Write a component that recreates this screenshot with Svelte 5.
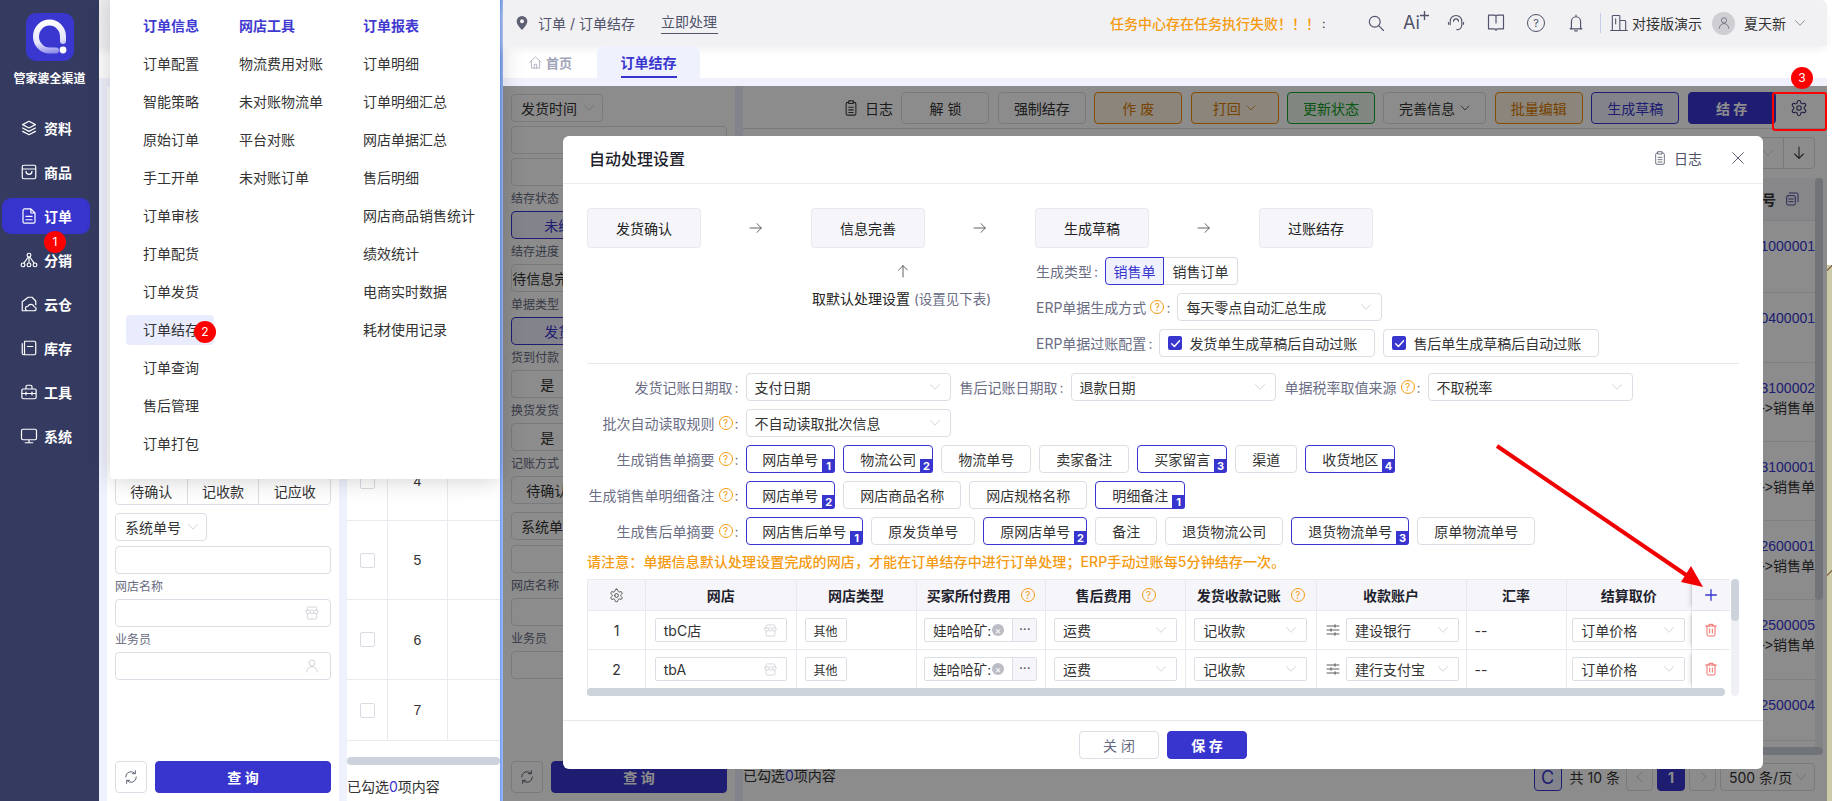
<script lang="ts">
	const icons: Record<string, string> = {
		layers: 'M12 3 3.5 7.5 12 12l8.5-4.5zM3.5 12l8.5 4.5 8.5-4.5M3.5 16.5 12 21l8.5-4.5',
		bag: 'M5 3h14a2 2 0 0 1 2 2v14a2 2 0 0 1-2 2H5a2 2 0 0 1-2-2V5a2 2 0 0 1 2-2zM3 8h18M8 11c0 5.5 8 5.5 8 0',
		doc: 'M6 2.5h8.5L20 8v11.5a2 2 0 0 1-2 2H6a2 2 0 0 1-2-2v-15a2 2 0 0 1 2-2zM14.5 2.5V8H20M8 12.5h8M8 17h8',
		nodes: 'M9.5 5.5a2.5 2.5 0 1 0 5 0a2.5 2.5 0 1 0-5 0M1.5 18.5a2.5 2.5 0 1 0 5 0a2.5 2.5 0 1 0-5 0M9.5 18.5a2.5 2.5 0 1 0 5 0a2.5 2.5 0 1 0-5 0M17.5 18.5a2.5 2.5 0 1 0 5 0a2.5 2.5 0 1 0-5 0M12 8v8M11 8l-6 8.5M13 8l6 8.5',
		cloud: 'M3 21V9l8-6h5l5 5v5M3 21h6M10 21a3 3 0 0 1 .5-6 4.5 4.5 0 0 1 8.5 1 2.5 2.5 0 0 1 0 5z',
		box: 'M6 3h13a2 2 0 0 1 2 2v14a2 2 0 0 1-2 2H6zM3 6v13a2 2 0 0 0 2 2M10 10h7',
		tool: 'M4 8h16a1.5 1.5 0 0 1 1.5 1.5V19a2 2 0 0 1-2 2h-15a2 2 0 0 1-2-2V9.5A1.5 1.5 0 0 1 4 8zM8 8V5a2 2 0 0 1 2-2h4a2 2 0 0 1 2 2v3M2.5 14h19M8 12v4M16 12v4',
		screen: 'M4 3h16a2 2 0 0 1 2 2v10a2 2 0 0 1-2 2H4a2 2 0 0 1-2-2V5a2 2 0 0 1 2-2zM12 17v4M7 21h10',
		search: 'M4 10.5a6.5 6.5 0 1 0 13 0a6.5 6.5 0 1 0-13 0M15.5 15.5 21 21',
		headset: 'M5 14v-4a7 7 0 0 1 14 0v4M3 11.5v2M21 11.5v2M19 14c0 3.5-2.5 6-6 6M9 10a3 3 0 0 1 6 0',
		book: 'M3 2.5h7a2 2 0 0 1 2 2 2 2 0 0 1 2-2h7V19h-7a2 2 0 0 0-2 2 2 2 0 0 0-2-2H3zM12 4.5V12',
		bell: 'M6.5 18v-8a5.5 5.5 0 0 1 11 0v8l1.5 1H5zM10.5 21.5h3M12 2.5v2',
		building: 'M4 21V4a1 1 0 0 1 1-1h7a1 1 0 0 1 1 1v17M13 9h6a1 1 0 0 1 1 1v11M2 21h20M8 7v6',
		user: 'M7.5 7.5a4.5 4.5 0 1 0 9 0a4.5 4.5 0 1 0-9 0M4 21c0-4.5 3.5-8 8-8s8 3.5 8 8',
		shop: 'M5 8V5a2 2 0 0 1 2-2h10a2 2 0 0 1 2 2v3M3 8h18v2a3 3 0 0 1-6 0 3 3 0 0 1-6 0 3 3 0 0 1-6 0zM5 13v6a2 2 0 0 0 2 2h10a2 2 0 0 0 2-2v-6',
		refresh: 'M4 12a8 8 0 0 1 14-5.3M20 12a8 8 0 0 1-14 5.3M18.5 2.5V7H14M5.5 21.5V17H10',
		chev: 'M4.5 8 12 16l7.5-8',
		gear: 'M12.22 2h-.44a2 2 0 0 0-2 2v.18a2 2 0 0 1-1 1.73l-.43.25a2 2 0 0 1-2 0l-.15-.08a2 2 0 0 0-2.73.73l-.22.38a2 2 0 0 0 .73 2.73l.15.1a2 2 0 0 1 1 1.72v.51a2 2 0 0 1-1 1.74l-.15.09a2 2 0 0 0-.73 2.73l.22.38a2 2 0 0 0 2.73.73l.15-.08a2 2 0 0 1 2 0l.43.25a2 2 0 0 1 1 1.73V20a2 2 0 0 0 2 2h.44a2 2 0 0 0 2-2v-.18a2 2 0 0 1 1-1.73l.43-.25a2 2 0 0 1 2 0l.15.08a2 2 0 0 0 2.73-.73l.22-.39a2 2 0 0 0-.73-2.73l-.15-.08a2 2 0 0 1-1-1.74v-.5a2 2 0 0 1 1-1.74l.15-.09a2 2 0 0 0 .73-2.73l-.22-.38a2 2 0 0 0-2.73-.73l-.15.08a2 2 0 0 1-2 0l-.43-.25a2 2 0 0 1-1-1.73V4a2 2 0 0 0-2-2zM9 12a3 3 0 1 0 6 0a3 3 0 1 0-6 0',
		clip: 'M9 2.5h6v3.5H9zM9 4.5H7.5a2 2 0 0 0-2 2V19.5a2 2 0 0 0 2 2h9a2 2 0 0 0 2-2V6.5a2 2 0 0 0-2-2H15M9 11h6M9 14.5h6M9 18h6',
		trash: 'M4 6h16M9 6V3.5h6V6M6 6v13a2 2 0 0 0 2 2h8a2 2 0 0 0 2-2V6M10 10.5v6M14 10.5v6',
		sliders: 'M3 6h18M15 4v4M3 12h18M9 10v4M3 18h18M15 16v4',
		home: 'M3 11.5 12 3l9 8.5M5.5 10v11h13V10M10 21v-6h4v6',
		right: 'M3 12h17M13.5 5.5 20 12l-6.5 6.5',
		up: 'M12 21V4M5.5 10.5 12 4l6.5 6.5',
		down: 'M12 3v17M5.5 13.5 12 20l6.5-6.5',
		copy: 'M8 3h11a2 2 0 0 1 2 2v11M6 7h9a2 2 0 0 1 2 2v10a2 2 0 0 1-2 2H6a2 2 0 0 1-2-2V9a2 2 0 0 1 2-2zM7 12h7M7 16h7',
		close: 'M4 4l16 16M20 4 4 20',
		plus: 'M12 4v16M4 12h16',
		left: 'M15 4 7 12l8 8',
		next: 'M9 4l8 8-8 8',
		check: 'M5 12.5l5 5L19.5 7'
	};

	const nav = [
		{ name: '资料', icon: 'layers' },
		{ name: '商品', icon: 'bag' },
		{ name: '订单', icon: 'doc', active: true },
		{ name: '分销', icon: 'nodes' },
		{ name: '云仓', icon: 'cloud' },
		{ name: '库存', icon: 'box' },
		{ name: '工具', icon: 'tool' },
		{ name: '系统', icon: 'screen' }
	];

	const menus = [
		{ title: '订单信息', items: ['订单配置', '智能策略', '原始订单', '手工开单', '订单审核', '打单配货', '订单发货', '订单结存', '订单查询', '售后管理', '订单打包'] },
		{ title: '网店工具', items: ['物流费用对账', '未对账物流单', '平台对账', '未对账订单'] },
		{ title: '订单报表', items: ['订单明细', '订单明细汇总', '网店单据汇总', '售后明细', '网店商品销售统计', '绩效统计', '电商实时数据', '耗材使用记录'] }
	];

	const toolbar = [
		{ text: '解 锁' },
		{ text: '强制结存' },
		{ text: '作 废', kind: 'warn' },
		{ text: '打回', kind: 'warn', chev: true },
		{ text: '更新状态', kind: 'ok' },
		{ text: '完善信息', chev: true, wide: true },
		{ text: '批量编辑', kind: 'warn' },
		{ text: '生成草稿', kind: 'line' },
		{ text: '结 存', kind: 'solid' }
	];

	const rows = [
		{ h: 72, no: '1', code: '1000001' },
		{ h: 70, no: '2', code: '0400001' },
		{ h: 79, no: '3', code: '3100002', sale: true },
		{ h: 79, no: '4', code: '3100001', sale: true },
		{ h: 79, no: '5', code: '2600001', sale: true },
		{ h: 80, no: '6', code: '2500005', sale: true },
		{ h: 61, no: '7', code: '2500004' }
	];

	const tagRows = [
		{ label: '生成销售单摘要', tags: [['网店单号', 1], ['物流公司', 2], ['物流单号'], ['卖家备注'], ['买家留言', 3], ['渠道'], ['收货地区', 4]] },
		{ label: '生成销售单明细备注', tags: [['网店单号', 2], ['网店商品名称'], ['网店规格名称'], ['明细备注', 1]] },
		{ label: '生成售后单摘要', tags: [['网店售后单号', 1], ['原发货单号'], ['原网店单号', 2], ['备注'], ['退货物流公司'], ['退货物流单号', 3], ['原单物流单号']] }
	];

	const shops = [
		{ no: 1, shop: 'tbC店', account: '建设银行' },
		{ no: 2, shop: 'tbA', account: '建行支付宝' }
	];
</script>

{#snippet icon(name, size = 16, color = 'currentColor', width = 1.6)}
	<svg class="icon" viewBox="0 0 24 24" width={size} height={size} fill="none" stroke={color} stroke-width={width} stroke-linecap="round" stroke-linejoin="round"><path d={icons[name]} /></svg>
{/snippet}

{#snippet help()}
	<span class="help">?</span>
{/snippet}

{#snippet select(text, cls = '')}
	<span class="field select {cls}"><span>{text}</span>{@render icon('chev', 14, '#c4c7d0', 1.3)}</span>
{/snippet}

{#snippet filterPanel()}
	<div class="filter">
		<span class="field pick"><span>发货时间</span>{@render icon('chev', 14, '#c4c7d0', 1.3)}</span>
		<span class="field input date"></span>
		<span class="field input date"></span>
		<span class="cap">结存状态</span>
		<div class="seg"><span class="on">未结存</span><span>已结存</span></div>
		<span class="cap">结存进度</span>
		<div class="seg"><span>待信息完善</span><span>待生成</span><span>待过账</span></div>
		<span class="cap">单据类型</span>
		<div class="seg"><span class="on">发货单</span><span>售后单</span></div>
		<span class="cap">货到付款</span>
		<div class="seg"><span>是</span><span>否</span><span>全部</span></div>
		<span class="cap">换货发货</span>
		<div class="seg"><span>是</span><span>否</span><span>全部</span></div>
		<span class="cap">记账方式</span>
		<div class="seg"><span>待确认</span><span>记收款</span><span>记应收</span></div>
		<span class="field pick mt8"><span>系统单号</span>{@render icon('chev', 14, '#c4c7d0', 1.3)}</span>
		<span class="field input mt5"></span>
		<span class="cap">网店名称</span>
		<span class="field input end">{@render icon('shop', 16, '#c9cbd3', 1.2)}</span>
		<span class="cap">业务员</span>
		<span class="field input end">{@render icon('user', 16, '#c9cbd3', 1.2)}</span>
		<div class="query">
			<button class="btn square">{@render icon('refresh', 16, '#555a6e', 1.4)}</button>
			<button class="btn solid grow">查 询</button>
		</div>
	</div>
{/snippet}

<div class="app">
	<aside class="sidebar">
		<div class="logo">
			<svg viewBox="0 0 48 48" width="48" height="48">
				<defs>
					<linearGradient id="ring" gradientUnits="userSpaceOnUse" x1="22" y1="6" x2="28" y2="42">
						<stop offset="0" stop-color="#ffffff" />
						<stop offset="0.6" stop-color="#e6e5fb" />
						<stop offset="1" stop-color="#7f7ce6" />
					</linearGradient>
				</defs>
				<path d="M37 28V23.5a13.5 14 0 1 0-13.5 14H30" fill="none" stroke="url(#ring)" stroke-width="6" stroke-linecap="round" />
				<circle cx="37" cy="37" r="3.4" fill="#fff" />
			</svg>
		</div>
		<div class="brand">管家婆全渠道</div>
		<nav class="nav">
			{#each nav as item}
				<div class="nav-item" class:active={item.active}>
					{@render icon(item.icon, 18, '#fff', 1.6)}
					<span>{item.name}</span>
				</div>
			{/each}
		</nav>
	</aside>

	<section class="back">
		<div class="back-top"></div>
		<div class="back-body">
			{@render filterPanel()}
			<div class="back-main">
				<div class="back-table">
					<div class="back-head"></div>
					{#each rows as row}
						<div class="back-row" style="height:{row.h}px">
							<span class="cell-check"><i class="checkbox"></i></span>
							<span class="cell-no">{row.no}</span>
						</div>
					{/each}
				</div>
				<div class="hbar"></div>
				<div class="picked">已勾选<b>0</b>项内容</div>
			</div>
		</div>
	</section>

	<div class="edge"></div>

	<section class="main">
		<header class="topbar">
			<div class="crumb">
				<svg viewBox="0 0 24 24" width="16" height="16"><path d="M12 1.5a8 8 0 0 0-8 8c0 5.8 8 13 8 13s8-7.2 8-13a8 8 0 0 0-8-8z" fill="#5d5f72" /><circle cx="12" cy="9.5" r="3" fill="#f1f1f4" /></svg>
				<span>订单 / 订单结存</span>
			</div>
			<span class="now">立即处理</span>
			<span class="alert">任务中心存在任务执行失败！！！</span>
			<span class="blink">:</span>
			<div class="tools">
				{@render icon('search', 20, '#50536a', 1.4)}
				<span class="ai">Ai<svg viewBox="0 0 10 10" width="9" height="9"><path d="M5 0v10M0 5h10" stroke="#50536a" stroke-width="1.5" /></svg></span>
				{@render icon('headset', 20, '#50536a', 1.4)}
				{@render icon('book', 20, '#50536a', 1.4)}
				<span class="round-help">?</span>
				{@render icon('bell', 20, '#50536a', 1.4)}
			</div>
			<i class="rule"></i>
			{@render icon('building', 20, '#50536a', 1.3)}
			<span class="company">对接版演示</span>
			<span class="avatar">{@render icon('user', 14, '#6a6c7c', 1.5)}</span>
			<span class="who">夏天新</span>
			{@render icon('chev', 14, '#6a6c7c', 1.3)}
		</header>

		<div class="tabs">
			<span class="tab home">{@render icon('home', 15, '#a9adbd', 1.4)}<span>首页</span></span>
			<span class="tab current"><span>订单结存</span></span>
		</div>
		<div class="tab-gap"></div>

		<div class="work">
			{@render filterPanel()}
			<div class="split"></div>
			<div class="panel">
				<div class="actions">
					<span class="log">{@render icon('clip', 18, '#3a3a3a', 1.4)}日志</span>
					{#each toolbar as b}
						<button class="btn act {b.kind ?? ''}" class:wide={b.wide}>{b.text}{#if b.chev}{@render icon('chev', 12, 'currentColor', 1.5)}{/if}</button>
					{/each}
					<span class="gear-slot">{@render icon('gear', 18, '#3a3a7a', 1.5)}</span>
				</div>
				<div class="sortbar">
					<span class="sort">
						<span class="sort-drop">{@render icon('chev', 14, '#c4c7d0', 1.3)}</span>
						<span class="sort-dir">{@render icon('down', 16, '#3a3a3a', 1.6)}</span>
					</span>
				</div>
				<div class="grid-wrap">
					<div class="grid">
						<div class="grid-head"><b>系统单号</b>{@render icon('copy', 16, '#3a3a9a', 1.4)}</div>
						{#each rows as row}
							<div class="grid-row" style="height:{row.h}px">
								<span class="code">2024{row.code}</span>
								{#if row.sale}<span class="sale">发货单-&gt;销售单</span>{/if}
							</div>
						{/each}
					</div>
					<div class="vbar"><i></i></div>
				</div>
				<div class="hbar dark"></div>
				<div class="panel-foot">
					<div class="picked">已勾选<b>0</b>项内容</div>
					<div class="pager">
						<span class="pg-c">C</span>
						<span class="total">共 10 条</span>
						<span class="pg">{@render icon('left', 14, '#c4c7d0', 1.4)}</span>
						<span class="pg on">1</span>
						<span class="pg">{@render icon('next', 14, '#c4c7d0', 1.4)}</span>
						<span class="size"><span>500 条/页</span>{@render icon('chev', 14, '#c4c7d0', 1.3)}</span>
					</div>
				</div>
			</div>
			<div class="mask"></div>
		</div>
	</section>

	<div class="strip"></div>

	<!-- fly-out menu opened from the sidebar -->
	<div class="flyout">
		{#each menus as col}
			<div class="fly-col">
				<h4>{col.title}</h4>
				{#each col.items as item}
					<span class="fly-item" class:hot={item === '订单结存'}>{item}</span>
				{/each}
			</div>
		{/each}
	</div>

	<!-- settings dialog -->
	<div class="modal">
		<div class="modal-head">
			<h3>自动处理设置</h3>
			<span class="head-log">{@render icon('clip', 16, '#5d5f72', 1.3)}日志</span>
			{@render icon('close', 16, '#50536a', 1.4)}
		</div>
		<div class="modal-body">
			<div class="flow">
				<span class="step">发货确认</span>
				<span class="flow-arrow">{@render icon('right', 16, '#555', 1.4)}</span>
				<span class="step">信息完善</span>
				<span class="flow-arrow">{@render icon('right', 16, '#555', 1.4)}</span>
				<span class="step">生成草稿</span>
				<span class="flow-arrow">{@render icon('right', 16, '#555', 1.4)}</span>
				<span class="step">过账结存</span>
			</div>
			<div class="flow-under">
				<div class="caption">
					{@render icon('up', 16, '#555', 1.4)}
					<p>取默认处理设置 <em>(设置见下表)</em></p>
				</div>
				<div class="erp">
					<div class="erp-row">
						<span class="lab">生成类型<i class="colon">:</i></span>
						<span class="radio on">销售单</span><span class="radio">销售订单</span>
					</div>
					<div class="erp-row">
						<span class="lab">ERP单据生成方式{@render help()}<i class="colon">:</i></span>
						{@render select('每天零点自动汇总生成', 'w205')}
					</div>
					<div class="erp-row">
						<span class="lab">ERP单据过账配置<i class="colon">:</i></span>
						<span class="field tick"><i class="checked">{@render icon('check', 13, '#fff', 2.6)}</i>发货单生成草稿后自动过账</span>
						<span class="field tick"><i class="checked">{@render icon('check', 13, '#fff', 2.6)}</i>售后单生成草稿后自动过账</span>
					</div>
				</div>
			</div>

			<div class="form">
				<div class="form-row">
					<span class="lab side">发货记账日期取<i class="colon">:</i></span>
					{@render select('支付日期', 'w205')}
					<span class="lab pad">售后记账日期取<i class="colon">:</i></span>
					{@render select('退款日期', 'w205')}
					<span class="lab pad">单据税率取值来源{@render help()}<i class="colon">:</i></span>
					{@render select('不取税率', 'w205')}
				</div>
				<div class="form-row">
					<span class="lab side">批次自动读取规则{@render help()}<i class="colon">:</i></span>
					{@render select('不自动读取批次信息', 'w205')}
				</div>
				{#each tagRows as row}
					<div class="form-row">
						<span class="lab side">{row.label}{@render help()}<i class="colon">:</i></span>
						<div class="tags">
							{#each row.tags as tag}
								<span class="tag" class:picked-tag={tag[1]}>{tag[0]}{#if tag[1]}<sup>{tag[1]}</sup>{/if}</span>
							{/each}
						</div>
					</div>
				{/each}
			</div>

			<p class="note">请注意：单据信息默认处理设置完成的网店，才能在订单结存中进行订单处理；ERP手动过账每5分钟结存一次。</p>

			<div class="sheet">
				<div class="sheet-left">
					<div class="sheet-clip">
						<div class="sheet-row head">
							<span class="c">{@render icon('gear', 15, '#444', 1.5)}</span>
							<span class="c">网店</span>
							<span class="c">网店类型</span>
							<span class="c">买家所付费用{@render help()}</span>
							<span class="c">售后费用{@render help()}</span>
							<span class="c">发货收款记账{@render help()}</span>
							<span class="c">收款账户</span>
							<span class="c">汇率</span>
							<span class="c">结算取价</span>
							<span class="c fixed">{@render icon('plus', 16, '#3835cf', 2)}</span>
						</div>
						{#each shops as s}
							<div class="sheet-row">
								<span class="c">{s.no}</span>
								<span class="c"><span class="field sm shop"><span>{s.shop}</span>{@render icon('shop', 15, '#c9cbd3', 1.2)}</span></span>
								<span class="c left"><span class="field sm kind">其他</span></span>
								<span class="c"><span class="field sm buyer"><span>娃哈哈矿:</span><i class="x">×</i><i class="dots">···</i></span></span>
								<span class="c">{@render select('运费', 'sm w123')}</span>
								<span class="c">{@render select('记收款', 'sm w113')}</span>
								<span class="c acc">{@render icon('sliders', 16, '#444', 1.3)}{@render select(s.account, 'sm w113')}</span>
								<span class="c rate">--</span>
								<span class="c">{@render select('订单价格', 'sm w113')}</span>
								<span class="c fixed">{@render icon('trash', 16, '#f0574f', 1.3)}</span>
							</div>
						{/each}
					</div>
					<div class="sheet-hbar"></div>
				</div>
				<div class="sheet-vbar"><i></i></div>
			</div>
		</div>
		<div class="modal-foot">
			<button class="btn foot">关 闭</button>
			<button class="btn solid foot">保 存</button>
		</div>
	</div>

	<!-- tutorial annotations drawn on top of the screenshot -->
	<i class="mark" style="left:44px;top:231px">1</i>
	<i class="mark" style="left:194px;top:321px">2</i>
	<i class="mark" style="left:1791px;top:67px">3</i>
	<i class="red-box"></i>
	<svg class="pointer" viewBox="0 0 1832 801" width="1832" height="801">
		<path d="M1497 446 1692 579" stroke="#f00000" stroke-width="4" fill="none" />
		<path d="M1703 587 1681 582 1691 566z" fill="#f00000" />
	</svg>
</div>

<style>
	:global(body) {
		margin: 0;
		background: #fff;
	}

	.app {
		position: relative;
		display: flex;
		width: 1832px;
		height: 801px;
		overflow: hidden;
		font-family: Inter, 'Noto Sans CJK SC', sans-serif;
		font-size: 14px;
		color: #333;
	}

	.icon {
		flex: none;
		display: block;
	}

	/* sidebar */
	.sidebar {
		flex: none;
		width: 99px;
		background: #353b60;
		color: #fff;
		display: flex;
		flex-direction: column;
		align-items: center;
		padding-top: 13px;
		box-sizing: border-box;
	}

	.logo {
		width: 48px;
		height: 48px;
		border-radius: 10px;
		background: #3a37d0;
	}

	.brand {
		margin-top: 9px;
		font-size: 12px;
		font-weight: 700;
		line-height: 17px;
		white-space: nowrap;
	}

	.nav {
		margin-top: 23px;
		width: 88px;
		display: flex;
		flex-direction: column;
		gap: 8px;
		margin-left: -7px;
	}

	.nav-item {
		height: 36px;
		border-radius: 9px;
		display: flex;
		align-items: center;
		gap: 6px;
		padding-left: 18px;
		font-weight: 700;
	}

	.nav-item.active {
		background: #3835cf;
	}

	/* window behind the flyout */
	.back {
		flex: none;
		width: 401px;
		display: flex;
		flex-direction: column;
		background: #eff1fd;
	}

	.back-top {
		height: 86px;
		flex: none;
		background: linear-gradient(#f1f1f4 0 46px, #fff 56px 78px, #eff1fd 78px);
	}

	.back-body {
		flex: 1;
		display: flex;
		padding-left: 8px;
		gap: 8px;
		min-height: 0;
		padding-top: 1px;
	}

	.back-main {
		flex: 1;
		background: #fff;
		min-width: 0;
		display: flex;
		flex-direction: column;
		overflow: hidden;
	}

	.back-head {
		height: 134px;
	}

	.back-row {
		display: flex;
		box-sizing: border-box;
		border-bottom: 1px solid #e8eaf0;
	}

	.cell-check {
		width: 40px;
		display: flex;
		align-items: center;
		justify-content: center;
		border-right: 1px solid #e8eaf0;
	}

	.checkbox {
		width: 13px;
		height: 13px;
		border: 1px solid #d9dbe3;
		border-radius: 2px;
	}

	.cell-no {
		width: 59px;
		display: flex;
		align-items: center;
		justify-content: center;
		border-right: 1px solid #e8eaf0;
		font-family: 'Liberation Sans', sans-serif;
	}

	.back-table {
		height: 662px;
		flex: none;
		overflow: hidden;
	}

	.hbar {
		height: 8px;
		margin-top: 8px;
		background: #cdd3db;
		border-radius: 4px;
		flex: none;
	}

	.picked {
		margin-top: 12px;
		line-height: 20px;
	}

	.picked b {
		font-weight: 400;
		color: #3835cf;
	}

	/* shared filter column */
	.filter {
		flex: none;
		width: 232px;
		box-sizing: border-box;
		padding: 8px 8px 0;
		background: #fff;
		display: flex;
		flex-direction: column;
		height: 100%;
	}

	.field {
		display: flex;
		align-items: center;
		box-sizing: border-box;
		border: 1px solid #dcdee6;
		border-radius: 4px;
		background: #fff;
		height: 28px;
		white-space: nowrap;
	}

	.pick {
		width: 92px;
		justify-content: space-between;
		padding: 0 6px 0 9px;
		font-size: 14px;
		flex: none;
	}

	.input {
		width: 216px;
		flex: none;
		justify-content: flex-end;
		padding-right: 10px;
	}

	.input.date {
		margin-top: 4px;
	}

	.mt8 {
		margin-top: 8px;
	}

	.mt5 {
		margin-top: 5px;
	}

	.cap {
		margin: 4px 0 3px;
		height: 18px;
		line-height: 18px;
		font-size: 12px;
		color: #666a80;
	}

	.seg {
		display: flex;
		height: 28px;
		flex: none;
		border: 1px solid #dcdee6;
		border-radius: 4px;
		box-sizing: border-box;
	}

	.seg span {
		flex: 1;
		display: flex;
		align-items: center;
		justify-content: center;
		border-right: 1px solid #dcdee6;
		white-space: nowrap;
		overflow: hidden;
	}

	.seg span:last-child {
		border-right: 0;
	}

	.seg .on {
		color: #3835cf;
		background: #eff1fd;
		box-shadow: 0 0 0 1px #3835cf;
		border-radius: 4px;
	}

	.query {
		margin-top: auto;
		margin-bottom: 8px;
		display: flex;
		gap: 8px;
	}

	.btn {
		font: inherit;
		border: 1px solid #dcdee6;
		border-radius: 4px;
		background: #fff;
		color: #333;
		padding: 0;
		display: inline-flex;
		align-items: center;
		justify-content: center;
		gap: 4px;
		box-sizing: border-box;
	}

	.btn.square {
		width: 32px;
		height: 32px;
		flex: none;
	}

	.btn.grow {
		flex: 1;
		height: 32px;
	}

	.btn.solid {
		background: #3835cf;
		border-color: #3835cf;
		color: #fff;
		font-weight: 700;
	}

	.edge {
		flex: none;
		width: 3px;
		background: linear-gradient(90deg, #6d9cf2, #9fbcf7);
	}

	/* main window */
	.main {
		flex: none;
		width: 1324px;
		display: flex;
		flex-direction: column;
		background: #fff;
	}

	.topbar {
		flex: none;
		height: 46px;
		box-sizing: border-box;
		background: #f1f1f4;
		display: flex;
		align-items: center;
		padding-left: 11px;
		color: #50536a;
		border-top-right-radius: 6px;
		box-shadow: 0 6px 8px -2px #f1f1f4;
		position: relative;
		z-index: 1;
	}

	.crumb {
		display: flex;
		align-items: center;
		gap: 8px;
		width: 147px;
	}

	.now {
		align-self: flex-start;
		height: 34px;
		line-height: 43px;
		box-sizing: border-box;
		border-bottom: 1px solid #50536a;
		padding-right: 1px;
	}

	.alert {
		margin-left: 392px;
		color: #f59a0f;
		font-weight: 500;
		white-space: nowrap;
		width: 212px;
	}

	.blink {
		color: #333;
		width: 34px;
		font-size: 12px;
	}

	.tools {
		display: grid;
		grid-template-columns: repeat(6, 40px);
		justify-items: center;
		align-items: center;
	}

	.ai {
		font-size: 18px;
		display: flex;
		align-items: flex-start;
		color: #50536a;
		line-height: 20px;
	}

	.ai svg {
		margin-top: -2px;
	}

	.round-help {
		width: 16px;
		height: 16px;
		border: 1.4px solid #50536a;
		border-radius: 50%;
		font-size: 11px;
		line-height: 16px;
		text-align: center;
	}

	.rule {
		width: 1px;
		height: 20px;
		background: #c7cde6;
		margin: 0 8px 0 4px;
	}

	.company {
		margin-left: 3px;
		color: #333;
		white-space: nowrap;
	}

	.avatar {
		width: 23px;
		height: 23px;
		border-radius: 50%;
		background: #cfcfd3;
		display: flex;
		align-items: center;
		justify-content: center;
		margin-left: 10px;
	}

	.who {
		margin: 0 7px 0 9px;
		color: #333;
	}

	.tabs {
		flex: none;
		height: 32px;
		display: flex;
		align-items: flex-end;
		background: #fff;
		padding-left: 25px;
	}

	.tab {
		display: inline-flex;
		align-items: center;
		justify-content: center;
		font-weight: 700;
		height: 32px;
	}

	.tab.home {
		width: 69px;
		gap: 3px;
		color: #a0a4b8;
		justify-content: flex-start;
		font-size: 13px;
	}

	.tab.current {
		width: 103px;
		background: #eff1fd;
		border-radius: 8px 8px 0 0;
		color: #3835cf;
		position: relative;
		z-index: 2;
	}

	.tab.current span {
		height: 32px;
		box-sizing: border-box;
		border-bottom: 2px solid #3835cf;
		line-height: 33px;
	}

	.tab-gap {
		flex: none;
		height: 8px;
		background: #eff1fd;
	}

	.work {
		flex: 1;
		display: flex;
		position: relative;
		min-height: 0;
		background: #fff;
	}

	.mask {
		position: absolute;
		inset: 0;
		background: rgba(0, 0, 0, 0.45);
	}

	.split {
		flex: none;
		width: 8px;
		background: #eff1fd;
	}

	.panel {
		flex: 1;
		min-width: 0;
		display: flex;
		flex-direction: column;
	}

	.actions {
		flex: none;
		height: 43px;
		box-sizing: border-box;
		padding-top: 6px;
		display: flex;
		justify-content: flex-end;
		align-items: flex-start;
		gap: 8.4px;
		border-bottom: 1px solid #dcdee6;
	}

	.log {
		display: flex;
		align-items: center;
		gap: 5px;
		height: 32px;
	}

	.act {
		width: 88px;
		height: 32px;
		flex: none;
	}

	.act.wide {
		width: 103px;
	}

	.act.warn {
		border-color: #f08c00;
		color: #d97a00;
		background: #fdf2e0;
	}

	.act.ok {
		border-color: #16a52c;
		color: #0f9b25;
		background: #e8f6ea;
	}

	.act.line {
		border-color: #3835cf;
		color: #3835cf;
		background: #eff1fd;
	}

	.act.solid {
		background: #3835cf;
		border-color: #3835cf;
		color: #fff;
		font-weight: 700;
	}

	.gear-slot {
		width: 43px;
		height: 32px;
		box-sizing: border-box;
		padding-right: 13px;
		display: flex;
		align-items: center;
		justify-content: center;
		flex: none;
	}

	.sortbar {
		flex: none;
		height: 49px;
		display: flex;
		justify-content: flex-end;
		align-items: flex-start;
		padding: 8px 12px 0 0;
		box-sizing: border-box;
	}

	.sort {
		display: flex;
		height: 32px;
		border: 1px solid #dcdee6;
		border-radius: 4px;
		box-sizing: border-box;
	}

	.sort-drop {
		width: 100px;
		display: flex;
		align-items: center;
		justify-content: flex-end;
		padding-right: 8px;
		border-right: 1px solid #dcdee6;
		box-sizing: border-box;
	}

	.sort-dir {
		width: 30px;
		display: flex;
		align-items: center;
		justify-content: center;
	}

	.grid-wrap {
		flex: none;
		height: 570px;
		display: flex;
		padding-right: 4px;
		background: #fff;
	}

	.grid {
		flex: 1;
		overflow: hidden;
		font-family: 'Liberation Sans', 'Noto Sans CJK SC', sans-serif;
	}

	.grid-head {
		height: 43px;
		box-sizing: border-box;
		display: flex;
		align-items: center;
		justify-content: flex-end;
		gap: 8px;
		padding-right: 15px;
		border-bottom: 1px solid #e8eaf0;
		background: #f6f6fa;
	}

	.grid-row {
		box-sizing: border-box;
		border-bottom: 1px solid #e8eaf0;
		display: flex;
		flex-direction: column;
		align-items: flex-end;
		padding-top: 15px;
		line-height: 20px;
	}

	.code {
		color: #3835cf;
		font-size: 14px;
	}

	.vbar {
		flex: none;
		width: 8px;
		background: #eef0f4;
	}

	.vbar i {
		display: block;
		height: 422px;
		background: #cdd3db;
		border-radius: 4px;
	}

	.hbar.dark {
		margin: -1px 4px 0 0;
	}

	.panel-foot {
		flex: 1;
		display: flex;
		justify-content: space-between;
		padding-right: 12px;
	}

	.panel-foot .picked {
		margin-top: 11px;
	}

	.pager {
		display: flex;
		align-items: center;
		align-self: flex-start;
		margin-top: 8px;
		height: 28px;
	}

	.pg-c {
		width: 28px;
		height: 28px;
		box-sizing: border-box;
		border: 1px solid #3835cf;
		border-radius: 4px;
		display: flex;
		align-items: center;
		justify-content: center;
		font-size: 18px;
		color: #3835cf;
		background: #eff1fd;
	}

	.total {
		margin: 0 6px 0 8px;
		white-space: nowrap;
	}

	.pg {
		width: 27px;
		height: 28px;
		box-sizing: border-box;
		border: 1px solid #dcdee6;
		border-radius: 4px;
		display: flex;
		align-items: center;
		justify-content: center;
		margin-right: 4px;
	}

	.pg.on {
		background: #3835cf;
		border-color: #3835cf;
		color: #fff;
		font-weight: 700;
		width: 28px;
	}

	.size {
		width: 95px;
		height: 28px;
		box-sizing: border-box;
		border: 1px solid #dcdee6;
		border-radius: 4px;
		display: flex;
		align-items: center;
		justify-content: space-between;
		padding: 0 6px 0 8px;
		white-space: nowrap;
	}

	.strip {
		flex: none;
		width: 5px;
		background:
			linear-gradient(135deg, transparent 40%, #8a7350 40% 60%, transparent 60%) 0 265px / 5px 6px no-repeat,
			linear-gradient(135deg, transparent 40%, #8a7350 40% 60%, transparent 60%) 0 570px / 5px 6px no-repeat,
			linear-gradient(#fff 0 265px, #cacaa6 265px);
	}

	/* flyout */
	.flyout {
		position: absolute;
		left: 110px;
		top: -5px;
		width: 390px;
		height: 484px;
		box-sizing: border-box;
		background: #fff;
		display: flex;
		padding: 0 0 0 33px;
		box-shadow: 0 0 24px rgba(0, 0, 0, 0.2);
		border-radius: 0 0 4px 4px;
	}

	.fly-col {
		width: 96px;
		display: flex;
		flex-direction: column;
		padding-top: 17px;
		isolation: isolate;
	}

	.fly-col:nth-child(2) {
		width: 124px;
	}

	h4 {
		margin: 0;
		font-size: 14px;
		font-weight: 700;
		color: #3f3ad0;
		height: 33px;
		line-height: 28px;
	}

	.fly-item {
		height: 38px;
		line-height: 38px;
		white-space: nowrap;
		color: #333;
		position: relative;
	}

	.fly-item.hot::before {
		content: '';
		position: absolute;
		left: -17px;
		top: 4px;
		width: 88px;
		height: 30px;
		background: #e9ecfd;
		border-radius: 4px;
		z-index: -1;
	}

	/* modal */
	.modal {
		position: absolute;
		left: 563px;
		top: 136px;
		width: 1200px;
		height: 633px;
		background: #fff;
		border-radius: 6px;
		display: flex;
		flex-direction: column;
	}

	.modal-head {
		flex: none;
		height: 48px;
		box-sizing: border-box;
		border-bottom: 1px solid #ebedf2;
		display: flex;
		align-items: center;
		padding: 0 17px 3px 26px;
	}

	h3 {
		margin: 0;
		font-size: 16px;
		font-weight: 500;
		color: #1f1f2e;
		flex: 1;
	}

	.head-log {
		display: flex;
		align-items: center;
		gap: 6px;
		margin-right: 28px;
		color: #50536a;
	}

	.modal-body {
		flex: 1;
		padding: 24px 24px 0;
		min-height: 0;
	}

	.flow {
		display: flex;
		height: 40px;
		align-items: center;
	}

	.step {
		width: 114px;
		height: 40px;
		box-sizing: border-box;
		border: 1px solid #e8e9ef;
		border-radius: 3px;
		background: #f6f6fa;
		display: flex;
		align-items: center;
		justify-content: center;
		color: #222;
	}

	.flow-arrow {
		width: 110px;
		display: flex;
		justify-content: center;
	}

	.flow-under {
		display: flex;
		height: 116px;
		border-bottom: 1px solid #e6e8ee;
		box-sizing: border-box;
		padding-left: 225px;
	}

	.caption {
		width: 224px;
		display: flex;
		flex-direction: column;
		padding-top: 15px;
	}

	.caption .icon {
		margin-left: 83px;
	}

	.caption p {
		margin: 10px 0 0;
		line-height: 20px;
		white-space: nowrap;
		color: #222;
	}

	.caption em {
		font-style: normal;
		color: #6b6e85;
		font-size: 13.5px;
	}

	.erp {
		padding-top: 9px;
		display: flex;
		flex-direction: column;
		gap: 8px;
	}

	.erp-row {
		display: flex;
		align-items: center;
		height: 28px;
	}

	.lab {
		display: inline-flex;
		align-items: center;
		color: #6b6e85;
		white-space: nowrap;
		flex: none;
	}

	.colon {
		font-style: normal;
		width: 6px;
		margin: 0 5px 0 2px;
		text-align: left;
	}

	.help {
		flex: none;
		width: 12px;
		height: 12px;
		box-sizing: content-box;
		border: 1.2px solid #f59a0f;
		border-radius: 50%;
		color: #f59a0f;
		font-size: 10px;
		line-height: 12px;
		text-align: center;
		margin-left: 4px;
		font-weight: 400;
	}

	.radio {
		height: 28px;
		width: 74px;
		box-sizing: border-box;
		border: 1px solid #dcdee6;
		border-left: 0;
		display: flex;
		align-items: center;
		justify-content: center;
		border-radius: 0 4px 4px 0;
	}

	.radio.on {
		width: 59px;
		border: 1px solid #3835cf;
		background: #eff1fd;
		color: #3835cf;
		border-radius: 4px 0 0 4px;
	}

	.select {
		justify-content: space-between;
		padding: 0 8px;
		flex: none;
	}

	.w205 {
		width: 205px;
	}

	.w123 {
		width: 123px;
	}

	.w113 {
		width: 113px;
	}

	.tick {
		padding: 0 14px 0 8px;
		gap: 7px;
		width: 216px;
		margin-right: 8px;
		color: #333;
	}

	.checked {
		width: 14px;
		height: 14px;
		background: #3835cf;
		border-radius: 2px;
		display: flex;
		align-items: center;
		justify-content: center;
		flex: none;
	}

	.form {
		padding-top: 9px;
		display: flex;
		flex-direction: column;
		gap: 8px;
	}

	.form-row {
		display: flex;
		align-items: center;
		height: 28px;
	}

	.lab.side {
		width: 158.5px;
		justify-content: flex-end;
	}

	.lab.pad {
		margin-left: 9px;
	}

	.tags {
		display: flex;
		gap: 8.4px;
	}

	.tag {
		position: relative;
		height: 28px;
		box-sizing: border-box;
		padding: 0 15.8px;
		border: 1px solid #dcdee6;
		border-radius: 4px;
		display: flex;
		align-items: center;
		white-space: nowrap;
		color: #333;
	}

	.picked-tag {
		border-color: #3835cf;
	}

	.tag sup {
		position: absolute;
		right: -1px;
		bottom: -1px;
		width: 13px;
		height: 14px;
		background: #3835cf;
		color: #fff;
		font-size: 11px;
		font-weight: 700;
		line-height: 14px;
		text-align: center;
		border-radius: 0 0 3px 0;
		vertical-align: baseline;
	}

	.note {
		margin: 7px 0;
		height: 20px;
		line-height: 20px;
		color: #f59a0f;
		white-space: nowrap;
		font-size: 14px;
		font-weight: 500;
		letter-spacing: 0.1px;
	}

	.sheet {
		display: flex;
		gap: 1px;
		width: 1152px;
		height: 117px;
	}

	.sheet-left {
		width: 1143px;
		display: flex;
		flex-direction: column;
		border-left: 1px solid #e8eaf0;
		box-sizing: border-box;
	}

	.sheet-clip {
		height: 109px;
		overflow: hidden;
		flex: none;
	}

	.sheet-row {
		display: grid;
		grid-template-columns: 58px 150.5px 120px 129.5px 140px 130.5px 150px 100px 125.5px 38px;
		height: 39px;
		box-sizing: border-box;
		border-bottom: 1px solid #e8eaf0;
	}

	.sheet-row.head {
		height: 32px;
		background: #f6f6fa;
		font-weight: 700;
		color: #1f1f2e;
		border-top: 1px solid #e8eaf0;
	}

	.c {
		display: flex;
		align-items: center;
		justify-content: center;
		border-right: 1px solid #e8eaf0;
		box-sizing: border-box;
		gap: 6px;
		min-width: 0;
		white-space: nowrap;
	}

	.c.left {
		justify-content: flex-start;
		padding-left: 8px;
	}

	.fixed {
		border-right: 0;
		box-shadow: -4px 0 5px -3px rgba(0, 0, 0, 0.18);
		background: #fff;
	}

	.head .fixed {
		background: #f6f6fa;
	}

	.rate {
		justify-content: flex-start;
		padding-left: 8px;
	}

	.acc {
		gap: 5px;
		padding-left: 2px;
	}

	.sm {
		height: 24px;
		border-radius: 2px;
	}

	.shop {
		width: 132px;
		justify-content: space-between;
		padding: 0 8px;
	}

	.kind {
		width: 42px;
		justify-content: center;
		font-size: 12px;
	}

	.buyer {
		width: 113px;
		padding-left: 8px;
		position: relative;
		overflow: hidden;
		font-size: 13.5px;
	}

	.x {
		width: 12px;
		height: 12px;
		border-radius: 50%;
		background: #bcbcc4;
		color: #fff;
		font-size: 10px;
		font-style: normal;
		line-height: 12px;
		text-align: center;
		margin-left: 1px;
	}

	.dots {
		position: absolute;
		right: 0;
		top: 0;
		bottom: 0;
		width: 23px;
		border-left: 1px solid #dcdee6;
		background: #f6f6fa;
		font-style: normal;
		text-align: center;
		line-height: 20px;
		color: #555;
	}

	.sheet-hbar {
		height: 8px;
		flex: none;
		background: #cdd3db;
		width: 1138px;
		margin-left: -1px;
		border-radius: 4px;
	}

	.sheet-vbar {
		width: 8px;
		background: #eef0f4;
		border-radius: 4px;
	}

	.sheet-vbar i {
		display: block;
		height: 42px;
		background: #cdd3db;
		border-radius: 4px;
	}

	.modal-foot {
		flex: none;
		height: 49px;
		border-top: 1px solid #e6e8ee;
		display: flex;
		justify-content: center;
		gap: 8px;
		padding-top: 10px;
		box-sizing: border-box;
		align-items: flex-start;
	}

	.foot {
		width: 80px;
		height: 28px;
		color: #666a80;
	}

	/* annotations */
	.mark {
		position: absolute;
		width: 22px;
		height: 22px;
		border-radius: 50%;
		background: #f00;
		color: #fff;
		font-style: normal;
		font-size: 12px;
		line-height: 22px;
		text-align: center;
	}

	.red-box {
		position: absolute;
		left: 1772px;
		top: 92px;
		width: 55px;
		height: 39px;
		box-sizing: border-box;
		border: 2px solid #f00;
		border-radius: 3px;
	}

	.pointer {
		position: absolute;
		left: 0;
		top: 0;
		pointer-events: none;
	}
</style>
